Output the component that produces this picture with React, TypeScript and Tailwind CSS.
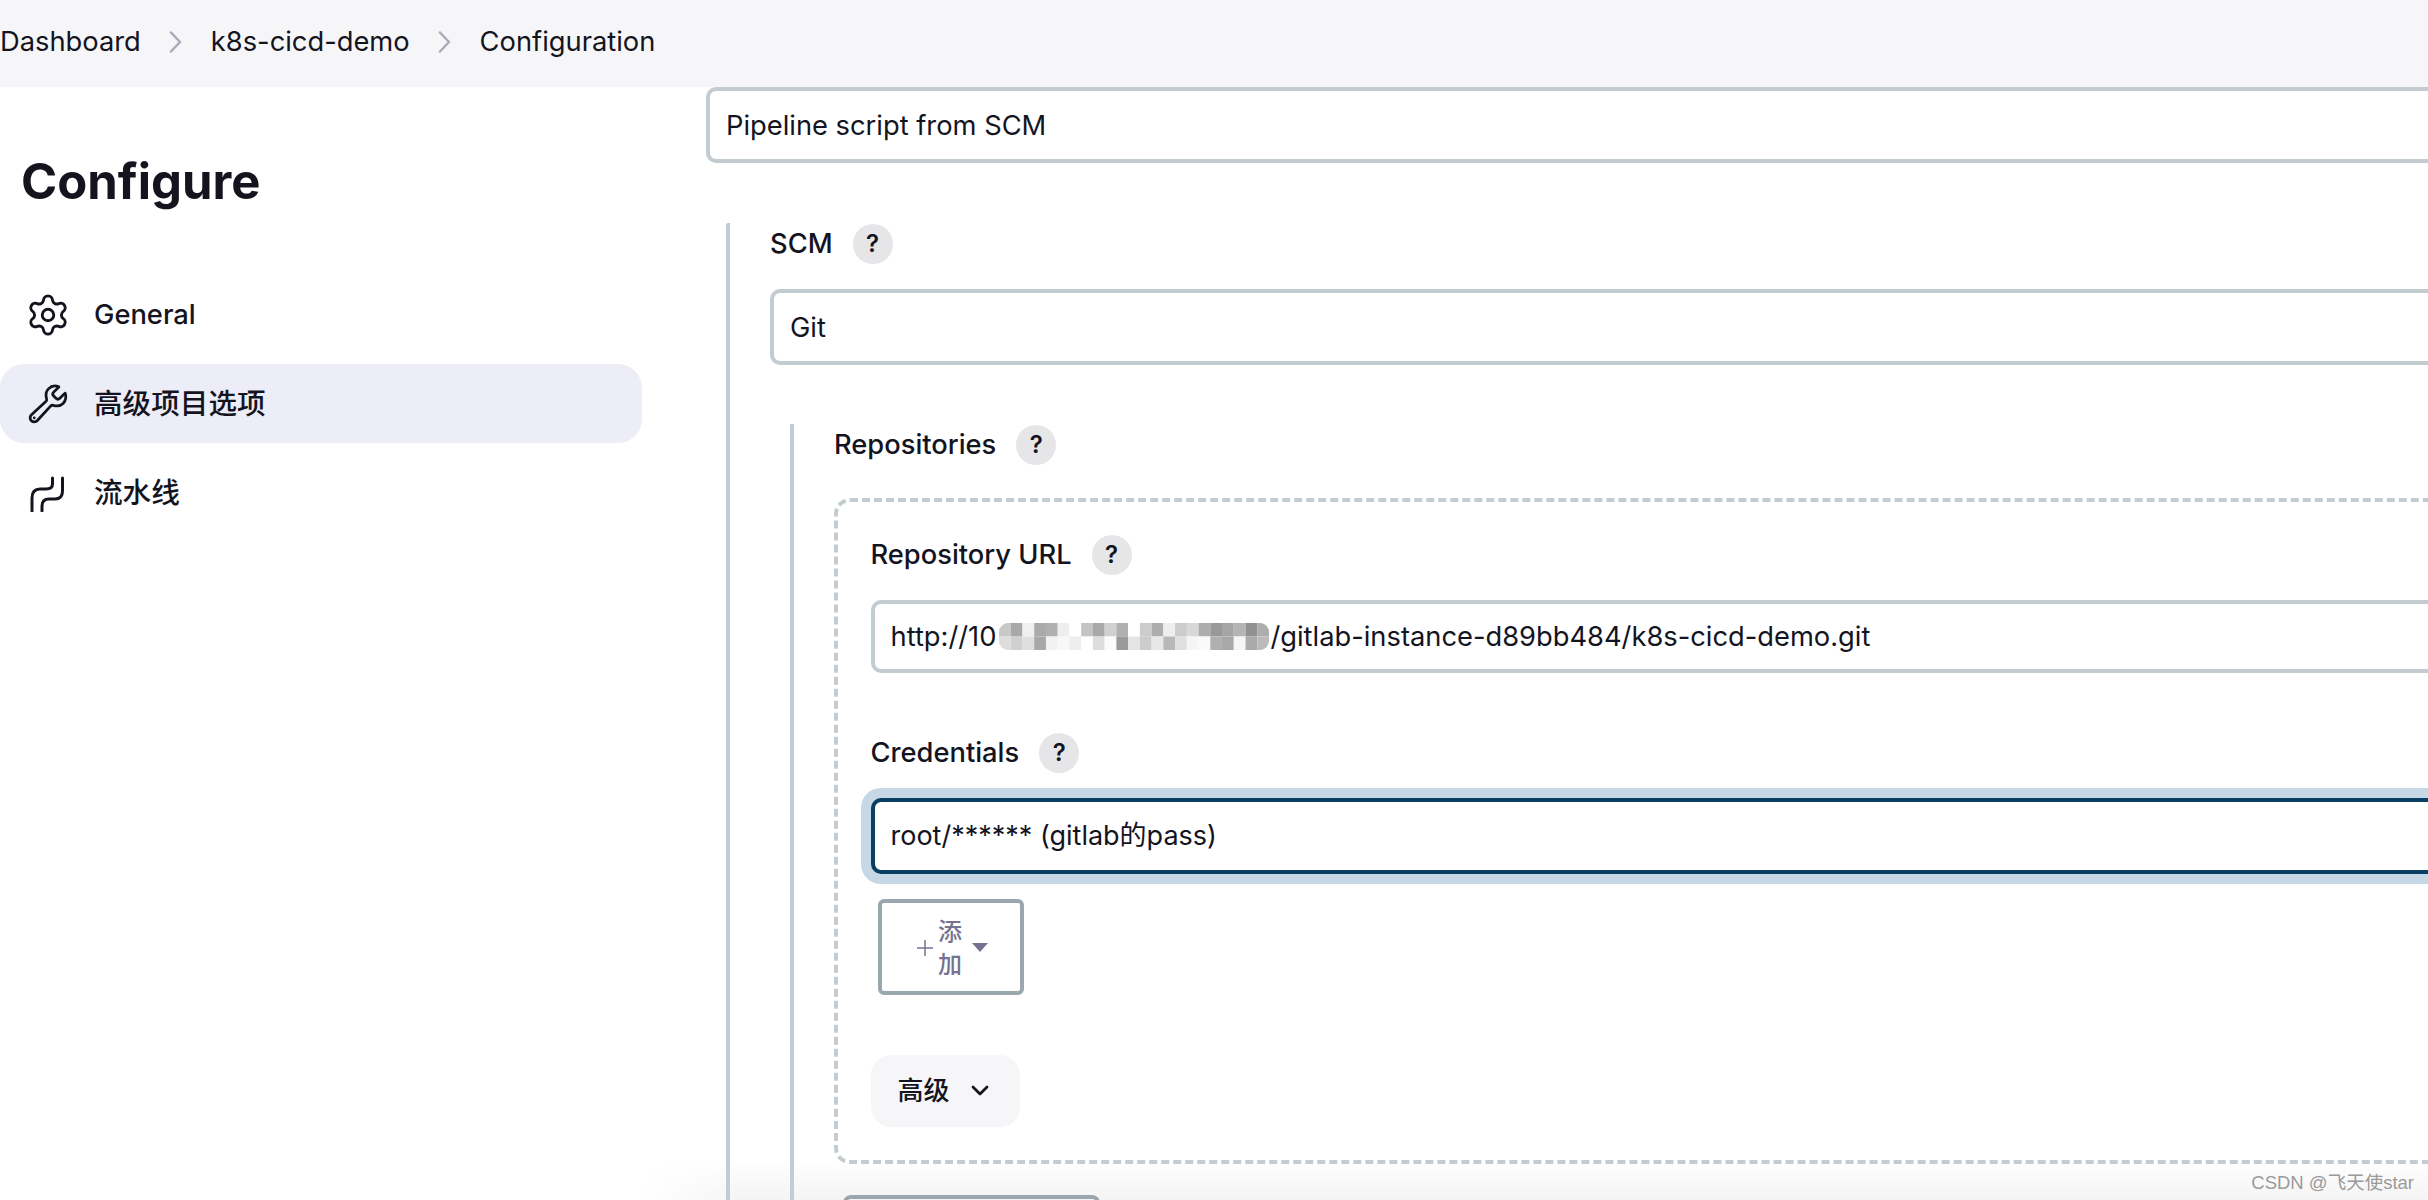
import { Settings } from "lucide-react";
import { IoBuildOutline } from "react-icons/io5";

const font = { fontFamily: '"Inter","Noto Sans CJK SC",sans-serif' };
const row1 = ["c8c8c8","a8a8a8","f0f0f0","aaaaaa","b0b0b0","eeeeee","ffffff","c4c4c4","a8a8a8","d0d0d0","b0b0b0","ffffff","cccccc","adadad","eeeeee","cccccc","d8d8d8","adadad","999999","a5a5a5","b5b5b5","919191","adadad"];
const row2 = ["dddddd","d0d0d0","dfdfdf","a8a8a8","f2f2f2","f8f8f8","eeeeee","ffffff","dddddd","fbfbfb","9a9a9a","e4e4e4","cccccc","e8e8e8","b8b8b8","e0e0e0","f5f5f5","fafafa","b0b0b0","a8a8a8","f5f5f5","aaaaaa","bbbbbb"];

function Help() {
  return (
    <span className="ml-[20px] flex h-[40px] w-[40px] items-center justify-center rounded-full bg-[#e6e6e8] text-[24px] font-semibold text-[#14141f]">?</span>
  );
}

function Label({ text }: { text: string }) {
  return (
    <div className="flex h-[40px] items-center text-[27.3px] font-medium text-[#14141f]">
      <span className="pt-[1px]">{text}</span>
      <Help />
    </div>
  );
}

function Field({ children, tall }: { children: React.ReactNode; tall?: boolean }) {
  return (
    <div className={`flex ${tall ? "h-[76px]" : "h-[73px]"} w-full items-center rounded-[10px] border-4 border-[#c3ccd1] bg-white pl-[16px] pt-[2px] text-[27.3px] text-[#14141f]`}>
      {children}
    </div>
  );
}

function Pixelated() {
  return (
    <svg width="270" height="27" viewBox="0 0 276 27" preserveAspectRatio="none" className="mb-[2px] ml-[3px] mr-[1px] block" aria-hidden="true">
      <defs>
        <clipPath id="blurclip"><rect x="0" y="0" width="276" height="27" rx="9" /></clipPath>
      </defs>
      <g clipPath="url(#blurclip)">
        {row1.map((c, i) => <rect key={i} x={i * 12} y="0" width="12" height="13.5" fill={`#${c}`} />)}
        {row2.map((c, i) => <rect key={i} x={i * 12} y="13.5" width="12" height="13.5" fill={`#${c}`} />)}
      </g>
    </svg>
  );
}

function PipelineIcon() {
  return (
    <svg width="39" height="39" viewBox="29 472 39 39" fill="none" stroke="#14141f" strokeWidth="3" strokeLinecap="round" strokeLinejoin="round">
      <path d="M53.5 477 V483 Q53.5 488 47 488 H41 Q33 488 33 497 V510" />
      <path d="M63.5 477 V490 Q63.5 498 56 498 H50 Q43 498 43 505 V510" />
    </svg>
  );
}

function NavItem({ icon, text, active, cjk }: { icon: React.ReactNode; text: string; active?: boolean; cjk?: boolean }) {
  return (
    <div className={`flex h-[79px] items-center rounded-[24px] pl-[28px] font-medium text-[#14141f] ${cjk ? "text-[28.6px]" : "text-[27.3px]"} ${active ? "bg-[#ecedf6]" : ""}`}>
      <span className="flex h-[39px] w-[39px] items-center justify-center">{icon}</span>
      <span className="ml-[27px] pt-[2px]">{text}</span>
    </div>
  );
}

function Chevron() {
  return (
    <svg width="13" height="22" viewBox="0 0 13 22" fill="none" stroke="#a9abb8" strokeWidth="2.5" strokeLinecap="round" strokeLinejoin="round" className="mx-[28.5px]">
      <path d="M2 1.5 L11 11 L2 20.5" />
    </svg>
  );
}

export default function App() {
  return (
    <div style={font} className="relative h-[1200px] w-[2428px] overflow-hidden bg-white">
      <div className="absolute bottom-0 left-[640px] right-0 h-[42px] bg-gradient-to-b from-white to-[#f4f4f5] [mask-image:linear-gradient(to_right,transparent,black_100px)]" />

      <div className="relative flex h-[87px] items-center bg-[#f6f6f8] pb-[3px] text-[27.3px] text-[#14141f]">
        <span>Dashboard</span>
        <Chevron />
        <span>k8s-cicd-demo</span>
        <Chevron />
        <span>Configuration</span>
      </div>

      <div className="relative flex h-[1113px] overflow-hidden">
        <aside className="w-[642px] shrink-0">
          <h1 className="ml-[21px] mt-[62px] text-[49px] leading-[66px] font-bold text-[#14141f]">Configure</h1>
          <div className="mt-[60px] flex flex-col gap-[10px]">
            <NavItem icon={<Settings size={46} strokeWidth={1.5} color="#14141f" className="shrink-0" />} text="General" />
            <NavItem active cjk icon={<IoBuildOutline size={44} color="#14141f" className="shrink-0" />} text="高级项目选项" />
            <NavItem cjk icon={<PipelineIcon />} text="流水线" />
          </div>
        </aside>

        <main className="ml-[64px] w-[2400px] shrink-0">
          <Field tall>Pipeline script from SCM</Field>

          <section className="ml-[20px] mt-[60px] rounded-[2px] border-l-4 border-[#c3ccd1] pb-[300px] pl-[40px] pt-px">
            <Label text="SCM" />
            <div className="mt-[25px]"><Field tall>Git</Field></div>

            <section className="ml-[20px] mt-[59px] border-l-4 border-[#c3ccd1] pb-[300px] pl-[40px] pt-px">
              <Label text="Repositories" />

              <div className="mt-[33px] rounded-[16px] border-4 border-dashed border-[#c3ccd1] pb-[33px] pl-[32.5px] pt-[33px]">
                <Label text="Repository URL" />
                <div className="mt-[25px]">
                  <Field>
                    <span>http://10</span>
                    <Pixelated />
                    <span>/gitlab-instance-d89bb484/k8s-cicd-demo.git</span>
                  </Field>
                </div>

                <div className="mt-[60px]"><Label text="Credentials" /></div>
                <div className="mt-[25px] flex h-[76px] w-full items-center rounded-[10px] border-4 border-[#0b3e63] bg-white pl-[16px] pt-[1px] text-[27px] text-[#14141f] shadow-[0_0_0_10px_#c6d7e6]">
                  root/****** (gitlab的pass)
                </div>

                <button className="ml-[7px] mt-[25px] flex h-[96px] w-[146px] items-center justify-center rounded-[6px] border-4 border-[#9ba7af] bg-white pl-[4px] pt-[1px] text-[24px] leading-[33px] text-[#75738f]">
                  <svg width="16" height="16" viewBox="0 0 16 16" stroke="#75738f" strokeWidth="1.5"><path d="M8 0 V16 M0 8 H16" /></svg>
                  <span className="ml-[5px] w-[24px] font-medium">添加</span>
                  <svg width="16" height="9" viewBox="0 0 16 9" className="ml-[10px]"><path d="M0 0 H16 L8 9 Z" fill="#75738f" /></svg>
                </button>

                <button className="mt-[60px] flex h-[72px] w-[149px] items-center rounded-[20px] bg-[#f6f6f8] pb-[1px] pl-[27px] text-[26px] font-medium text-[#14141f]">
                  <span>高级</span>
                  <svg width="18" height="11" viewBox="0 0 18 11" fill="none" stroke="#14141f" strokeWidth="2.8" strokeLinecap="round" strokeLinejoin="round" className="ml-[21px]"><path d="M2 2 L9 9 L16 2" /></svg>
                </button>
              </div>

              <div className="ml-[9px] mt-[31px] h-[60px] w-[257px] rounded-[8px] border-4 border-[#9ba7af]" />
            </section>
          </section>
        </main>
      </div>

      <div className="absolute bottom-[5px] right-[14px] text-[18.5px] leading-[24px] text-[#9a9a9a]" style={{ fontFamily: '"Liberation Sans","Noto Sans CJK SC",sans-serif' }}>CSDN @飞天使star</div>
    </div>
  );
}
